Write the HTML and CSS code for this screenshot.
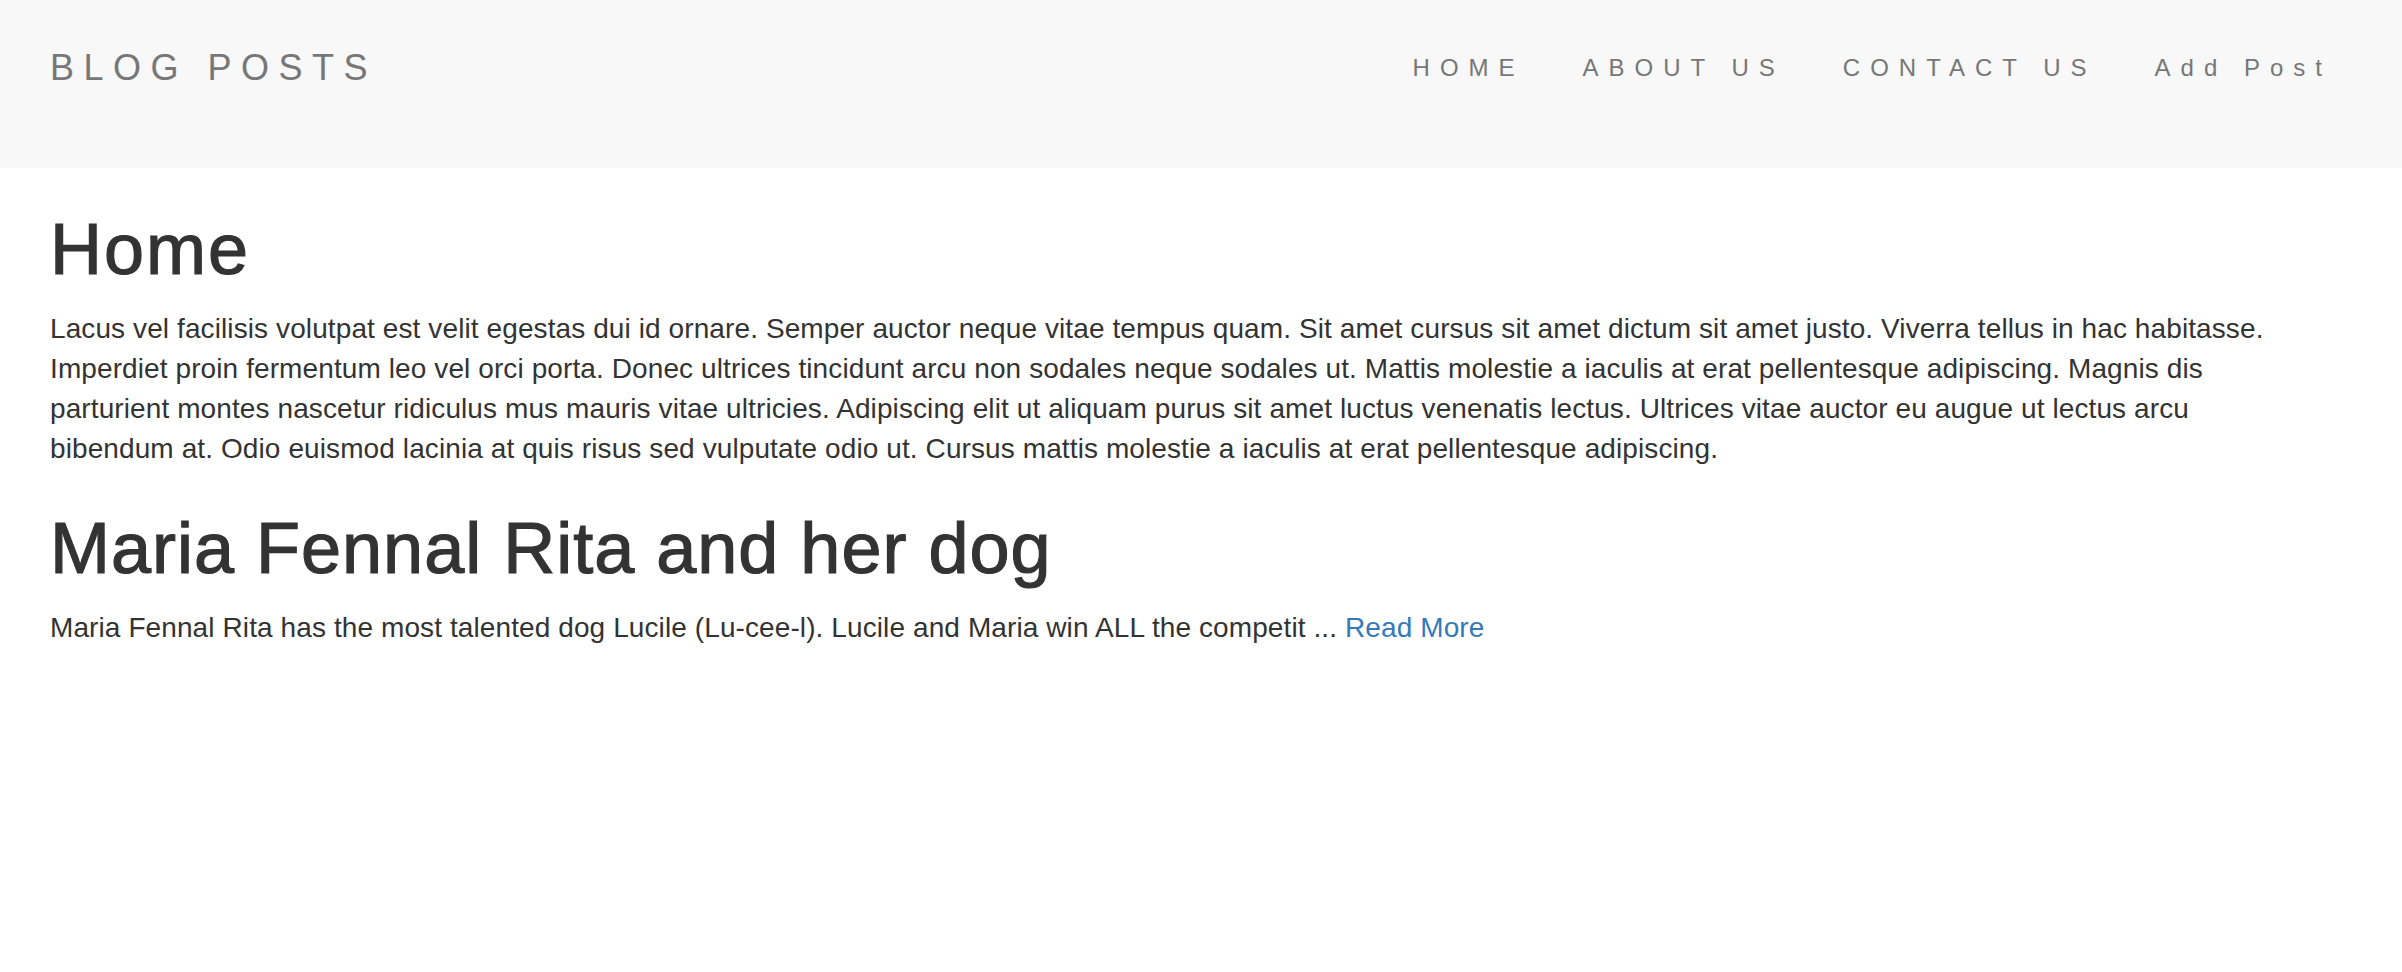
FILE: index.html
```html
<!DOCTYPE html>
<html lang="en">
<head>
<meta charset="utf-8">
<title>Blog Posts</title>
<link rel="stylesheet" href="styles.css">
</head>
<body>
<header class="navbar">
  <a class="brand" href="#">BLOG POSTS</a>
  <nav>
    <ul class="nav-links">
      <li><a href="#">HOME</a></li>
      <li><a href="#">ABOUT US</a></li>
      <li><a href="#">CONTACT US</a></li>
      <li><a href="#">Add Post</a></li>
    </ul>
  </nav>
</header>
<main class="content">
  <h1 class="page-title">Home</h1>
  <p class="intro">Lacus vel facilisis volutpat est velit egestas dui id ornare. Semper auctor neque vitae tempus quam. Sit amet cursus sit amet dictum sit amet justo. Viverra tellus in hac habitasse. Imperdiet proin fermentum leo vel orci porta. Donec ultrices tincidunt arcu non sodales neque sodales ut. Mattis molestie a iaculis at erat pellentesque adipiscing. Magnis dis parturient montes nascetur ridiculus mus mauris vitae ultricies. Adipiscing elit ut aliquam purus sit amet luctus venenatis lectus. Ultrices vitae auctor eu augue ut lectus arcu bibendum at. Odio euismod lacinia at quis risus sed vulputate odio ut. Cursus mattis molestie a iaculis at erat pellentesque adipiscing.</p>
  <article class="post">
    <h1 class="post-title">Maria Fennal Rita and her dog</h1>
    <p class="excerpt">Maria Fennal Rita has the most talented dog Lucile (Lu-cee-l). Lucile and Maria win ALL the competit ... <a class="read-more" href="#">Read More</a></p>
  </article>
</main>
</body>
</html>
```
FILE: styles.css
```css
html, body {
  margin: 0;
  padding: 0;
  background: #ffffff;
}

body {
  font-family: "Liberation Sans", Helvetica, Arial, sans-serif;
  font-size: 28px;
  line-height: 40px;
  color: #333333;
}

a {
  text-decoration: none;
}

.navbar {
  box-sizing: border-box;
  height: 168px;
  background: #f8f8f8;
  display: flex;
  justify-content: space-between;
  align-items: flex-start;
  padding: 48px 70px 0 50px;
}

.brand {
  font-size: 36px;
  line-height: 40px;
  letter-spacing: 9.5px;
  color: #777777;
}

.nav-links {
  list-style: none;
  margin: 0;
  padding: 0;
  display: flex;
  gap: 58px;
}

.nav-links a {
  display: block;
  font-size: 24px;
  line-height: 40px;
  letter-spacing: 10px;
  color: #777777;
}

.content {
  padding: 2px 50px 0 50px;
}

.page-title,
.post-title {
  font-size: 72px;
  line-height: 1.1;
  font-weight: 500;
  letter-spacing: 1px;
  margin: 40px 0 20px;
  color: #333333;
  -webkit-text-stroke: 1.2px #333333;
}

.page-title {
  letter-spacing: 2px;
}

.intro,
.excerpt {
  margin: 0 0 20px;
  max-width: 2250px;
  letter-spacing: 0.1px;
}

.read-more {
  color: #337ab7;
}
```
